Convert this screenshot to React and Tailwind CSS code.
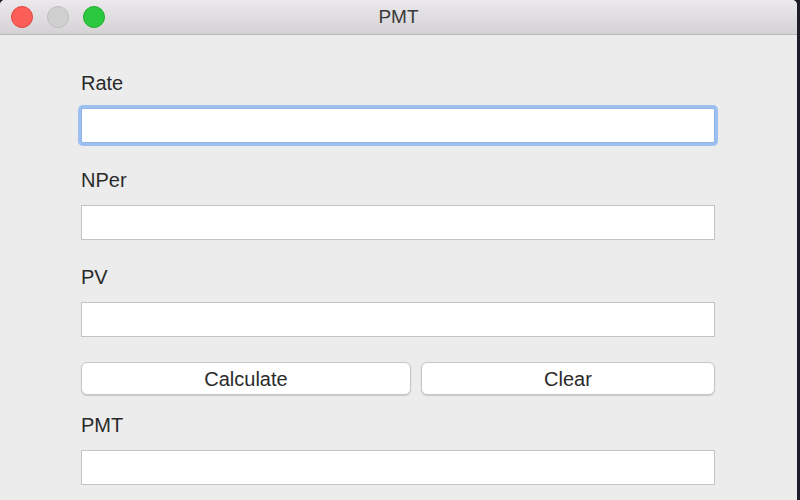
import React from 'react'

const Field = ({ label, focused, className = '' }) => (
  <div className={className}>
    <div className="text-[20px] leading-[24px] text-[#2a2a2a]">{label}</div>
    <input
      type="text"
      className={`mt-[13px] block w-full h-[35px] bg-white border outline-none ${
        focused
          ? 'border-[#8fb4e8] ring-[3px] ring-[#9cc0f0] rounded-[2px]'
          : 'border-[#c4c4c4]'
      }`}
    />
  </div>
)

export default function App() {
  return (
    <div className="w-[800px] h-[500px] bg-[#1d1c28] overflow-hidden" style={{ fontFamily: '"Liberation Sans", Arial, sans-serif' }}>
      <div className="w-[797px] h-[500px] bg-[#ececec] rounded-t-[5px] overflow-hidden">
        {/* Title bar */}
        <div className="relative h-[35px] bg-gradient-to-b from-[#ebe9eb] to-[#d4d2d4] border-b border-[#b8b8b8] flex items-center">
          <div className="flex gap-[14px] pl-[11px]">
            <span className="w-[22px] h-[22px] rounded-full bg-[#fc5f57] border border-[#e0443e]" />
            <span className="w-[22px] h-[22px] rounded-full bg-[#d0d0d0] border border-[#bdbdbd]" />
            <span className="w-[22px] h-[22px] rounded-full bg-[#2bc840] border border-[#1dad2b]" />
          </div>
          <div className="absolute inset-0 flex items-center justify-center text-[19px] text-[#3a3a3a]">PMT</div>
        </div>

        {/* Form */}
        <div className="pl-[81px] pr-[82px] pt-[36px]">
          <Field label="Rate" focused />
          <Field label="NPer" className="mt-[25px]" />
          <Field label="PV" className="mt-[25px]" />
          <div className="mt-[25px] flex gap-[10px]">
            <button className="w-[330px] h-[33px] bg-white border border-[#c6c6c6] rounded-[6px] shadow-[0_1px_1px_rgba(0,0,0,0.15)] text-[20px] text-[#2a2a2a]">Calculate</button>
            <button className="flex-1 h-[33px] bg-white border border-[#c6c6c6] rounded-[6px] shadow-[0_1px_1px_rgba(0,0,0,0.15)] text-[20px] text-[#2a2a2a]">Clear</button>
          </div>
          <Field label="PMT" className="mt-[18px]" />
        </div>
      </div>
    </div>
  )
}
